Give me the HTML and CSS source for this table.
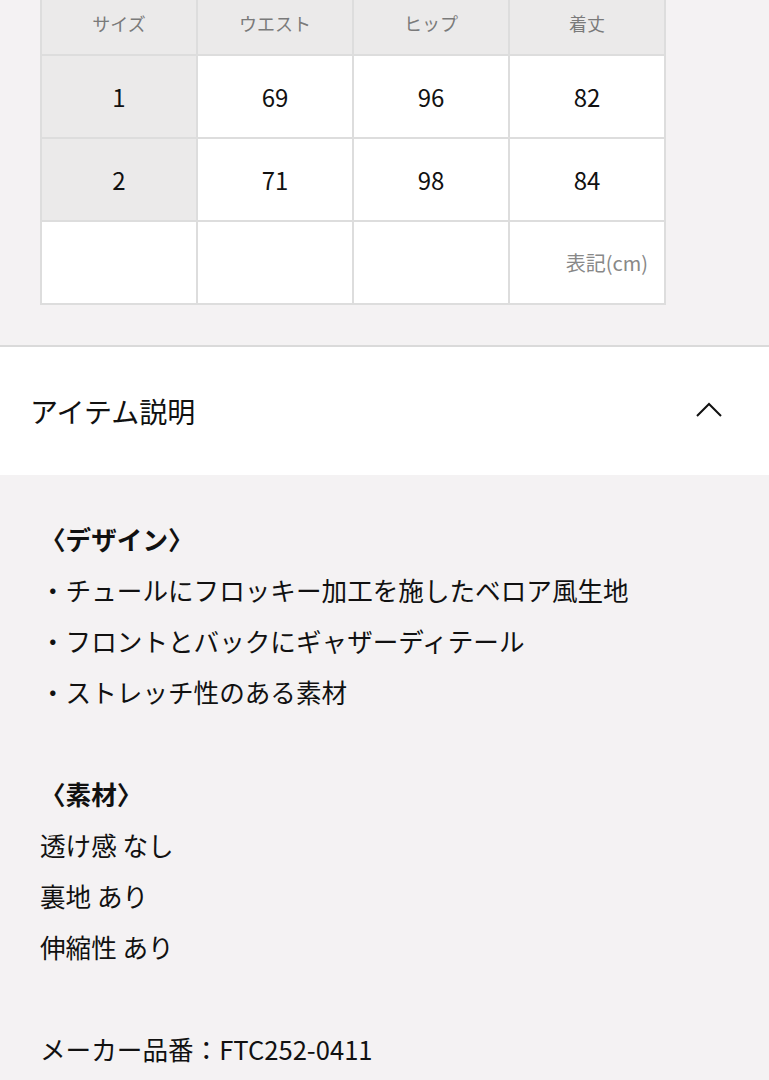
FILE: index.html
```html
<!DOCTYPE html>
<html lang="ja">
<head>
<meta charset="utf-8">
<link rel="stylesheet" href="styles.css">
</head>
<body>
<section class="size-area">
  <div class="size-table">
    <div class="cell head">サイズ</div>
    <div class="cell head">ウエスト</div>
    <div class="cell head">ヒップ</div>
    <div class="cell head">着丈</div>

    <div class="cell label">1</div>
    <div class="cell">69</div>
    <div class="cell">96</div>
    <div class="cell">82</div>

    <div class="cell label">2</div>
    <div class="cell">71</div>
    <div class="cell">98</div>
    <div class="cell">84</div>

    <div class="cell"></div>
    <div class="cell"></div>
    <div class="cell"></div>
    <div class="cell note">表記(cm)</div>
  </div>
</section>

<section class="accordion">
  <h2 class="acc-title">アイテム説明</h2>
  <svg class="chevron" width="28" height="18" viewBox="0 0 28 18"><polyline points="2,15 14,3 26,15" fill="none" stroke="#111" stroke-width="2"/></svg>
</section>

<section class="desc">
  <p class="line bold">〈デザイン〉</p>
  <p class="line">・チュールにフロッキー加工を施したベロア風生地</p>
  <p class="line">・フロントとバックにギャザーディテール</p>
  <p class="line">・ストレッチ性のある素材</p>
  <p class="line blank"></p>
  <p class="line bold">〈素材〉</p>
  <p class="line">透け感 なし</p>
  <p class="line">裏地 あり</p>
  <p class="line">伸縮性 あり</p>
  <p class="line blank"></p>
  <p class="line">メーカー品番：FTC252-0411</p>
</section>
</body>
</html>
```

FILE: styles.css
```css
html, body {
  margin: 0;
  padding: 0;
}
body {
  width: 769px;
  background: #f4f2f3;
  font-family: "Noto Sans CJK JP", "Noto Sans", sans-serif;
  color: #111;
  overflow: hidden;
}
.size-area {
  padding: 0 0 40px 40px;
  border-bottom: 2px solid #dadada;
}
.size-table {
  margin-top: -11px;
  width: 626px;
  display: grid;
  grid-template-columns: repeat(4, 1fr);
  grid-template-rows: 63px 81px 81px 81px;
  gap: 2px;
  padding: 2px;
  box-sizing: border-box;
  background: #dddddd;
}
.cell {
  background: #ffffff;
  display: flex;
  align-items: center;
  justify-content: center;
  font-size: 24px;
  color: #111;
}
.cell.head,
.cell.label {
  background: #ebeaea;
}
.cell.head {
  font-size: 18px;
  color: #7a7a7a;
}
.cell.note {
  justify-content: flex-end;
  padding-right: 16px;
  font-size: 20px;
  color: #888;
}
.accordion {
  background: #fff;
  height: 128px;
  display: flex;
  align-items: center;
  justify-content: space-between;
  padding: 0 46px 0 30px;
}
.acc-title {
  margin: 0;
  font-size: 28px;
  font-weight: 400;
  color: #111;
}
.chevron {
  display: block;
  margin-bottom: 2px;
}
.desc {
  padding: 38px 0 40px 40px;
}
.line {
  margin: 0;
  font-size: 25.6px;
  line-height: 51px;
  height: 51px;
  color: #111;
  white-space: nowrap;
}
.line.bold {
  font-weight: 700;
}
```
